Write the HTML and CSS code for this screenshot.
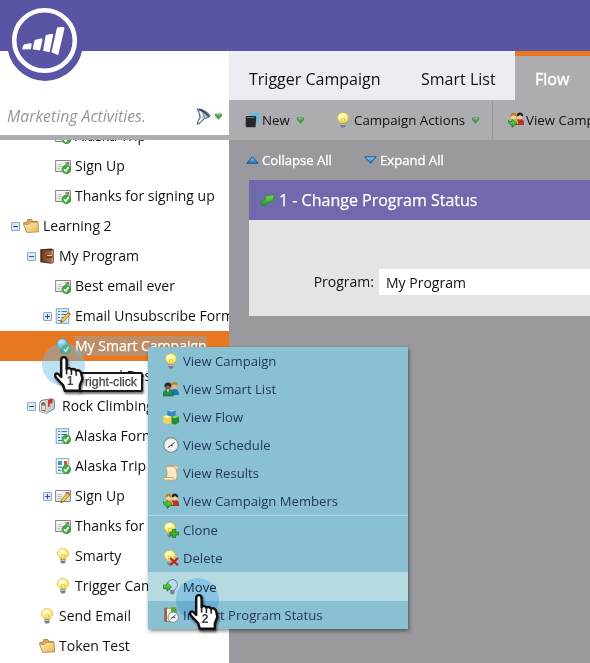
FILE: index.html
```html
<!DOCTYPE html>
<html lang="en">
<head>
<meta charset="utf-8">
<title>Marketing Activities</title>
<link rel="stylesheet" href="styles.css">
</head>
<body>
<svg class="defs" aria-hidden="true">
  <defs>
    <linearGradient id="gGold" x1="0" y1="0" x2="1" y2="1"><stop offset="0" stop-color="#fff3b8"/><stop offset="1" stop-color="#e6b452"/></linearGradient>
    <radialGradient id="gBulb" cx=".42" cy=".35" r=".65"><stop offset="0" stop-color="#fffff0"/><stop offset=".5" stop-color="#fff595"/><stop offset="1" stop-color="#ecd54e"/></radialGradient>
    <radialGradient id="gBlue" cx=".4" cy=".35" r=".65"><stop offset="0" stop-color="#d4efff"/><stop offset="1" stop-color="#5ba9d4"/></radialGradient>
    <linearGradient id="gGreen" x1="0" y1="0" x2="0" y2="1"><stop offset="0" stop-color="#7be05c"/><stop offset="1" stop-color="#209426"/></linearGradient>
    <linearGradient id="gSky" x1="0" y1="0" x2="0" y2="1"><stop offset="0" stop-color="#83d0ff"/><stop offset="1" stop-color="#2274c0"/></linearGradient>
    <linearGradient id="gBrown" x1="0" y1="0" x2="1" y2="0"><stop offset="0" stop-color="#6d3a20"/><stop offset="1" stop-color="#b0714a"/></linearGradient>
    <linearGradient id="gPaper" x1="0" y1="0" x2="1" y2="1"><stop offset="0" stop-color="#fff"/><stop offset="1" stop-color="#d9d9d6"/></linearGradient>
  </defs>
  <symbol id="check" viewBox="0 0 16 16"><circle cx="11.4" cy="11.4" r="4.3" fill="#3fae3c" stroke="#2a8c30" stroke-width=".6"/><path d="M9 11.3l1.700 2 3-4.300" fill="none" stroke="#fff" stroke-width="1.500"/></symbol>
  <symbol id="pencil" viewBox="0 0 16 16"><path d="M5.7 14.5l1-3.2 6.500-7.100 2.200 1.900-6.500 7.200z" fill="#f7c93a" stroke="#8b6420" stroke-width=".7"/><path d="M12.200 5.300l1-1.100 2.200 1.900-1 1.100z" fill="#d7665b"/><path d="M5.700 14.500l.5-1.600 1.100 1z" fill="#333"/></symbol>
  <symbol id="letter" viewBox="0 0 16 16"><path d="M.6 2.500h14.800v11H.6z" fill="url(#gPaper)" stroke="#858585"/><path d="M2.500 6.500h4M2.500 8.500h5M2.500 10.500h4" stroke="#b4b4b4" stroke-width=".8"/><path d="M10.500 4h3.500v3.500h-3.500z" fill="#b8a08c"/><path d="M12.500 4H14v2h-1.500z" fill="#b44f42"/><path d="M10.500 4h1.700v1.700h-1.700z" fill="#78a2c2"/></symbol>
  <symbol id="mail-ok" viewBox="0 0 16 16"><use href="#letter"/><use href="#check"/></symbol>
  <symbol id="mail-edit" viewBox="0 0 16 16"><use href="#letter"/><use href="#pencil"/></symbol>
  <symbol id="sheet" viewBox="0 0 16 16"><path d="M1.200.7h12.600v14.600H1.200z" fill="#dceefb" stroke="#7fa2be"/><path d="M3 3.500h2M6.500 3.500h5.500M3 6.500h2M6.500 6.500h5.500M3 9.500h2M6.500 9.500h5M3 12.500h4" stroke="#4478a4" stroke-width="1.200"/></symbol>
  <symbol id="form-edit" viewBox="0 0 16 16"><use href="#sheet"/><use href="#pencil"/></symbol>
  <symbol id="form-ok" viewBox="0 0 16 16"><use href="#sheet"/><use href="#check"/></symbol>
  <symbol id="page-ok" viewBox="0 0 16 16"><path d="M1.200.7h12.600v14.600H1.200z" fill="#f4faff" stroke="#87a4b9"/><path d="M3 3h4v4H3z" fill="#3b93ce"/><path d="M9 3h3.400v4H9z" fill="#d75440"/><path d="M3 8.500h4v1.400H3zM3 11.500h3V13H3z" fill="#4b91be"/><use href="#check"/></symbol>
  <symbol id="folder" viewBox="0 0 16 16"><path d="M3.500 13.700L.5 4.800l3.700-.9.5-2.400 4.300.1.800 1.900h4.700l.8 9.800z" fill="#dda851" stroke="#a97838" stroke-width=".8"/><path d="M4 14.600L.5 6.200l4.500.3 2-1.900 8-.3.700 9.600z" fill="url(#gGold)" stroke="#b58542" stroke-width=".7"/></symbol>
  <symbol id="program" viewBox="0 0 16 16"><path d="M1.300 1.200l11-.8 2.500 1.400v12.500L12.300 15.700 1.300 14.200z" fill="#4f2818"/><path d="M2.800 2l9.400.7v12.100l-9.400-1.400z" fill="url(#gBrown)"/><path d="M12.200 2.600l2.300-.6v12l-2.300.9z" fill="#c88c61"/><path d="M7.500 8.300h6" stroke="#3b1e14" stroke-width="3"/><path d="M8 7.700h5.200" stroke="#f4ddc4" stroke-width="1.200"/></symbol>
  <symbol id="bulb" viewBox="0 0 16 16"><path d="M8 .5a5.700 5.300 0 0 0-5.700 5.300c0 2.400 2.700 3.400 3.100 5.500h5.200c.4-2.100 3.100-3.100 3.100-5.500A5.700 5.300 0 0 0 8 .5z" fill="url(#gBulb)" stroke="#d1b83c" stroke-width=".7"/><path d="M7 11L6.300 6.700h3.400L9 11" fill="none" stroke="#e0b62d" stroke-width=".7"/><path d="M5.400 11.200h5.200v2.700L9.300 15.600H6.700l-1.300-1.700z" fill="#777e85"/><path d="M5.500 12.300h5" stroke="#d9dfe2" stroke-width=".9"/></symbol>
  <symbol id="bulb-blue" viewBox="0 0 16 16"><path d="M7.300.5a5.300 5.300 0 0 0-5.300 5.300c0 2.400 2.400 3.500 2.800 5.600h5c.4-2.100 2.800-3.200 2.800-5.600A5.300 5.300 0 0 0 7.300.5z" fill="url(#gBlue)" stroke="#4a8fb8" stroke-width=".8"/><path d="M4.900 11.300h4.800v2.500L8.400 15.200H6.200l-1.300-1.400z" fill="#586c7a"/><use href="#check"/></symbol>
  <symbol id="mailbox" viewBox="0 0 16 16"><path d="M.7 13.500V5.500Q.7 2 4.200 2l8.300-1.200q3-.2 3 3v7L7.300 15.300z" fill="#c7d0d5" stroke="#7c8a92"/><path d="M1.500 13V6q0-2.500 2.700-2.500T7.200 6v8.500z" fill="#8d6a5a" stroke="#eee"/><path d="M2.600 7.500h3.500v4.500H2.600z" fill="#e7dccb"/><path d="M9.800 9V2.500l3-.8v3l-1.700.4" fill="#d33c32" stroke="#c12e29" stroke-width="1.300"/></symbol>
  <symbol id="people" viewBox="0 0 16 16"><path d="M7 14c0-4 1.500-6 4.500-6s4.500 2 4.500 6z" fill="#2173a9"/><circle cx="11.500" cy="4.800" r="3.100" fill="#e5b586"/><path d="M8.200 4.500q.3-3.600 3.400-3.400 3.300-.1 3.400 3.400-2.400 0-3.800-1.500-1 1.200-3 1.500z" fill="#ba822c"/><path d="M0 15c0-4.500 1.500-6.200 5-6.200s5.200 2 5.200 6.200z" fill="#238b4b" stroke="#16613a" stroke-width=".6"/><circle cx="4.900" cy="5.700" r="3.200" fill="#90614a"/><path d="M1.400 5.700q0-4.200 3.600-4.200 3.600 0 3.400 4.200-2 0-3.400-1.500-1.300 1.500-3.600 1.500z" fill="#272727"/><path d="M4 8.800l1 3 1-3" fill="#fff"/></symbol>
  <symbol id="members" viewBox="0 0 16 16"><path d="M7.500 13c0-4 1-6 4.500-6s4 2 4 6z" fill="#b53427"/><circle cx="11.800" cy="4.400" r="3" fill="#f3ca98"/><path d="M8.600 4.500q0-3.900 3.200-3.900 3.500 0 3.400 4.100-2-.3-3.100-1.600-1.200 1.100-3.500 1.400z" fill="#302820"/><path d="M1.500 12c0-3.500 1-5 4.200-5s4.500 1.500 4.500 5z" fill="#d8a933"/><circle cx="5.500" cy="4.500" r="3" fill="#f5ce9f"/><path d="M2.300 4.800Q2.100.8 5.500.8q3.500 0 3.300 3.900-2-.3-3.100-1.600-1.100 1.300-3.400 1.700z" fill="#b98022"/><path d="M.4 8.200q1 2 3.600 1.600V7.300l5 4-5 4.200V13Q.5 13 .4 8.200z" fill="url(#gGreen)" stroke="#16791b" stroke-width=".7"/></symbol>
  <symbol id="blocks" viewBox="0 0 16 16"><path d="M4.300 1.500L8.200.2l4.500 1.200v6L8.200 8.900 4.300 7.200z" fill="#3b86cb"/><path d="M4.300 1.500L8.200.2l4.500 1.200L8.200 2.700z" fill="#9bd3f4"/><path d="M.2 7.500l3.700-1 4.600 1.300v6.100L4.200 15.500.2 13.800z" fill="#f2d353"/><path d="M.2 7.500l3.700-1 4.600 1.300-4.300 1.400z" fill="#fff6b0"/><path d="M8.600 8l3.800-1.700L16 7.800v5.800l-4.400 2.200-3-1.500z" fill="#238d2f"/><path d="M8.600 8l3.800-1.700L16 7.800l-4.400 1.600z" fill="#7ed65c"/></symbol>
  <symbol id="clock" viewBox="0 0 16 16"><circle cx="8" cy="8" r="7.300" fill="#f3f5f6" stroke="#84898e" stroke-width="1.200"/><circle cx="8" cy="8" r="5.700" fill="none" stroke="#b6bdc1" stroke-width=".8" stroke-dasharray=".8 2.180"/><path d="M4.800 10.500L7.700 8.400 11.500 5.500M7.700 8.400L10 9" fill="none" stroke="#454b50"/></symbol>
  <symbol id="scroll" viewBox="0 0 16 16"><path d="M3.500 1h10q2.300.2 2 3h-2.500q1.500 5 .8 8.700-.3 2.500-2.300 2.500H2.300Q.3 15 .4 12.300h3.200Q5 8 3.400 4 2.500 1.500 3.500 1z" fill="#f9ebc8" stroke="#c29a63" stroke-width=".7"/><path d="M1 12.500h9q.3 2 1.500 2M4 1.300q8.700-.3 9 2.500" fill="none" stroke="#cf9f5d" stroke-width=".9"/></symbol>
  <symbol id="bulb-add" viewBox="0 0 16 16"><use href="#bulb" x="-1.200" y="-.3" width="16" height="16"/><path d="M9.600 7.300h3v2.800h2.900v2.900h-2.900v2.700h-3V13H6.800v-2.900h2.800z" fill="#39b62d" stroke="#1c7a1c" stroke-width=".8"/></symbol>
  <symbol id="bulb-del" viewBox="0 0 16 16"><use href="#bulb" x="-1.200" y="-.3" width="16" height="16"/><path d="M7.200 8l7.800 7.200M15 8l-7.800 7.200" stroke="#bd251f" stroke-width="2.200"/></symbol>
  <symbol id="bulb-move" viewBox="0 0 16 16"><path d="M9.500.5a5.200 5.200 0 0 0-5 5.200c0 2.400 1.800 3.600 2.500 5.700h4.500c.7-2.100 3-3.300 3-5.700A5 5.200 0 0 0 9.500.5z" fill="#bddbed" stroke="#65869c"/><path d="M7 11.300h4.500v2.600l-1.200 1.600h-2.100L7 13.900z" fill="#7c8790"/><path d="M.4 6h3.600V3.500l4.600 4.400L4 12.300V9.700H.4z" fill="url(#gGreen)" stroke="#16791b" stroke-width=".7"/></symbol>
  <symbol id="import" viewBox="0 0 16 16"><path d="M2 1.200h11v13.300H2z" fill="#f4f1e5" stroke="#a58468"/><path d="M1.300.8h2.700v14H1.300z" fill="#94674a"/><path d="M8 .4h5.500v5.500H8z" fill="#54aa38"/><circle cx="10.200" cy="10.200" r="5.200" fill="#f3f5f6" stroke="#7f878b"/><path d="M7.600 12l5-4M10 10.100l2.300.7" stroke="#43494d"/></symbol>
  <symbol id="caret" viewBox="0 0 8 7"><path d="M.4.500h7.200v2L4 6.700.4 2.500z" fill="#42a838" stroke="#278329" stroke-width=".7"/><path d="M1.500 1.500h5" stroke="#a0df8b"/></symbol>
  <symbol id="hand" viewBox="0 0 30 34"><path d="M8.500 19V5.200q0-2.700 2.200-2.700T13 5.200v7.300q2.200-1.800 4 .5 2.400-1.400 3.900.9 2.300-1.300 4 1.300l1.300 5.600-2.200 5.200v4.500H11.500L10.200 26l-5.900-6.300q-1.800-2.500 0-3.400 1.300-.7 4.200 2.700z" fill="#fff" stroke="#111" stroke-width="2" stroke-linejoin="round"/><path d="M13 12v5M17 13.500v4M21 14.500v3.500" stroke="#222" stroke-width="1.300"/></symbol>
</svg>

<div class="app">
  <header class="topbar">
    <div class="logo">
      <svg viewBox="0 0 76 76"><circle cx="38" cy="38" r="38" fill="#5a54a4"/><circle cx="37.500" cy="35.500" r="30.300" fill="none" stroke="#fff" stroke-width="4.600"/><path d="M17.500 39.300l5.500-1q2-.3 1.700 1.500l-.8 4.500-8.600.2q.3-4.100 2.200-5.200zM28.500 34.700l5.300-1.300q2-.4 1.700 1.500L33 45.400l-7.300-1.200 1.600-8.100q.3-1.100 1.200-1.400zM39.700 29.800l4.700-.9q2.100-.4 1.700 1.700L42.600 47.200l-6.500-1.400L38.500 31q.2-1 1.200-1.200zM51.200 22.300l4.500-.3q2.100-.2 1.700 2L51.200 50.200l-6.700-3L49.800 23.500q.3-1.100 1.400-1.200z" fill="#fff"/></svg>
    </div>
  </header>
  <div class="body">
    <aside class="sidebar">
      <div class="search">
        <span class="search-label">Marketing Activities.</span>
        <svg class="funnel" viewBox="0 0 15 17"><path d="M1 1Q5 .5 9 3l4.500 3.500q1 1.200.2 2.200Q11.500 10 8.500 10.500L4 15.200 1.300 16.300l.3-2.500L4 9.500Q3.500 4.500 1 1z" fill="#b4c4d6" stroke="#414e66" stroke-width=".9"/><path d="M3 1.500Q9 3.500 12.800 8.500" fill="none" stroke="#34465f" stroke-width="1.800"/><path d="M4 3.500Q6.500 7 5.800 10L3 14" fill="none" stroke="#fff" stroke-width="1.300"/><path d="M7.500 5.500q1.300 2 .5 4.500" fill="none" stroke="#6e84a0"/></svg>
        <svg class="caret"><use href="#caret"/></svg>
      </div>
      <div class="tree">
        <div class="row l3"><i></i><svg><use href="#mail-ok"/></svg><span>Alaska Trip</span></div>
        <div class="row l3"><i></i><svg><use href="#mail-ok"/></svg><span>Sign Up</span></div>
        <div class="row l3"><i></i><svg><use href="#mail-ok"/></svg><span>Thanks for signing up</span></div>
        <div class="row l1"><i class="box"></i><svg><use href="#folder"/></svg><span>Learning 2</span></div>
        <div class="row l2"><i class="box"></i><svg><use href="#program"/></svg><span>My Program</span></div>
        <div class="row l3"><i></i><svg><use href="#mail-ok"/></svg><span>Best email ever</span></div>
        <div class="row l3"><i class="box plus"></i><svg><use href="#form-edit"/></svg><span>Email Unsubscribe Form</span></div>
        <div class="row l3 selected"><i></i><svg><use href="#bulb-blue"/></svg><span>My Smart Campaign</span></div>
        <div class="row l3"><i></i><svg class="blank"></svg><span>Second Desc</span></div>
        <div class="row l2"><i class="box"></i><svg><use href="#mailbox"/></svg><span class="wide-gap">Rock Climbing</span></div>
        <div class="row l3"><i></i><svg><use href="#form-ok"/></svg><span>Alaska Form</span></div>
        <div class="row l3"><i></i><svg><use href="#page-ok"/></svg><span>Alaska Trip</span></div>
        <div class="row l3"><i class="box plus"></i><svg><use href="#mail-edit"/></svg><span>Sign Up</span></div>
        <div class="row l3"><i></i><svg><use href="#mail-ok"/></svg><span>Thanks for</span></div>
        <div class="row l3"><i></i><svg><use href="#bulb"/></svg><span>Smarty</span></div>
        <div class="row l3"><i></i><svg><use href="#bulb"/></svg><span>Trigger Campaign</span></div>
        <div class="row l2"><i></i><svg><use href="#bulb"/></svg><span>Send Email</span></div>
        <div class="row l2"><i></i><svg><use href="#folder"/></svg><span>Token Test</span></div>
      </div>
    </aside>
    <main class="main">
      <nav class="tabs">
        <span class="tab trigger">Trigger Campaign</span><span class="tab list">Smart List</span><span class="tab active">Flow</span>
      </nav>
      <div class="toolbar">
        <div class="tool new"><svg class="tool-icon" viewBox="0 0 16 16"><path d="M5 .7h8q1 0 1 1v9h-3V4H5z" fill="#63b9df"/><path d="M2 4h8q1.300 0 1.200 1.500l-.7 9.800H2Q.7 15.300.7 14V5.500Q.7 4 2 4z" fill="#26292c"/><path d="M2 5.500h7.500" stroke="#777"/></svg><span>New</span><svg class="caret"><use href="#caret"/></svg></div>
        <div class="tool actions"><svg class="tool-icon"><use href="#bulb"/></svg><span>Campaign Actions</span><svg class="caret"><use href="#caret"/></svg></div>
        <div class="tool members"><svg class="tool-icon"><use href="#members"/></svg><span>View Campaign</span></div>
      </div>
      <div class="expanders">
        <span class="exp first"><svg viewBox="0 0 13 8"><path d="M6.500.7l5.600 6.500H.9z" fill="url(#gSky)" stroke="#165286"/></svg>Collapse All</span>
        <span class="exp"><svg viewBox="0 0 13 8"><path d="M6.500 7.300L.9.800h11.200z" fill="url(#gSky)" stroke="#165286"/></svg>Expand All</span>
      </div>
      <section class="card">
        <h2><svg viewBox="0 0 15 12"><path d="M.8 8.500L6.300 4.600 4.500 2.400 14 .7l-1.200 7.800-2-1.500L5 11.400 1.600 11z" fill="url(#gGreen)" stroke="#278e28" stroke-width=".7"/></svg>1 - Change Program Status</h2>
        <div class="field"><label>Program:</label><div class="input">My Program</div></div>
      </section>
    </main>
  </div>

  <div class="halo one"></div>
  <div class="callout">right-click</div>
  <div class="menu">
    <div class="item"><svg><use href="#bulb"/></svg>View Campaign</div>
    <div class="item"><svg><use href="#people"/></svg>View Smart List</div>
    <div class="item"><svg><use href="#blocks"/></svg>View Flow</div>
    <div class="item"><svg><use href="#clock"/></svg>View Schedule</div>
    <div class="item"><svg><use href="#scroll"/></svg>View Results</div>
    <div class="item"><svg><use href="#members"/></svg>View Campaign Members</div>
    <div class="item split"><svg><use href="#bulb-add"/></svg>Clone</div>
    <div class="item"><svg><use href="#bulb-del"/></svg>Delete</div>
    <div class="item hover"><svg><use href="#bulb-move"/></svg>Move</div>
    <div class="item"><svg><use href="#import"/></svg>Import Program Status</div>
  </div>
  <div class="halo two"></div>
  <div class="pointer p1"><svg><use href="#hand"/></svg><b>1</b></div>
  <div class="pointer p2"><svg><use href="#hand"/></svg><b>2</b></div>
</div>
</body>
</html>
```
FILE: styles.css
```css
* { box-sizing: border-box; }
body { margin: 0; font: 14px "Open Sans", sans-serif; color: #111; }
.defs { position: absolute; width: 0; height: 0; }
.app { position: relative; width: 590px; height: 663px; overflow: hidden; background: #9a999e; }
.topbar { height: 51px; background: #5a54a4; }
.logo { position: absolute; left: 7px; top: 5px; width: 76px; height: 76px; z-index: 1; }
.logo svg { display: block; width: 76px; height: 76px; }
.body { display: flex; height: 612px; }

.sidebar { width: 229px; flex: none; background: #fff; overflow: hidden; }
.search { height: 89px; border-bottom: 5px solid #adacb1; display: flex; align-items: flex-end; padding: 0 7px 8px 7px; }
.search-label { font-size: 15.8px; line-height: 22px; font-style: italic; color: #96969a; flex: 1; white-space: nowrap; }
.funnel { width: 15px; height: 17px; margin: 0 4px 2px 0; }
.caret { width: 7px; height: 7px; flex: none; }
.search .caret { margin-bottom: 7px; }
.tree { height: 523px; overflow: hidden; }
.row { height: 30px; display: flex; align-items: center; white-space: nowrap; }
.row:first-child { margin-top: -19px; }
.row svg { width: 16px; height: 16px; flex: none; margin-right: 4px; }
.row i { width: 9px; height: 9px; margin-right: 3px; flex: none; }
.row span { padding-bottom: 2px; }
.l1 { padding-left: 11px; }
.l2 { padding-left: 27px; }
.l3 { padding-left: 43px; }
.box { border: 1px solid #8aa6ca; border-radius: 1px; background: linear-gradient(#274d88, #274d88) center / 5px 1px no-repeat, #dfeaf8; }
.plus { background: linear-gradient(#274d88, #274d88) center / 5px 1px no-repeat, linear-gradient(#274d88, #274d88) center / 1px 5px no-repeat, #dfeaf8; }
.wide-gap { margin-left: 3px; }
.selected { background: #e87722; color: #fff; }
.row.selected span { background: #bd8e68; line-height: 20px; padding: 0; -webkit-text-stroke: .25px #fff; }

.main { flex: 1; min-width: 0; overflow: hidden; }
.tabs { height: 49px; display: flex; background: #adacb1; font-size: 16px; line-height: 56px; }
.tab { background: #edecf2; white-space: nowrap; overflow: hidden; }
.trigger { width: 172px; padding-left: 20px; }
.list { width: 114px; padding-left: 20px; }
.active { flex: 1; border-top: 5px solid #e87722; background: #adacb1; color: #fff; padding-left: 20px; line-height: 46px; -webkit-text-stroke: .4px #fff; }
.toolbar { height: 40px; background: #adacb1; display: flex; font-size: 13.3px; }
.tool { display: flex; align-items: center; white-space: nowrap; flex: none; }
.tool-icon { width: 16px; height: 16px; margin-right: 1px; }
.tool .caret { margin-left: 7px; }
.new { width: 91px; padding-left: 16px; }
.actions { width: 172px; padding-left: 15px; }
.actions .tool-icon { margin-right: 3px; }
.tool.members { border-left: 1px solid #98979c; padding-left: 15px; }
.tool.members .tool-icon { margin-right: 2px; }
.expanders { height: 40px; display: flex; align-items: center; color: #fff; padding: 0 0 0 17px; font-size: 13.1px; -webkit-text-stroke: .3px #fff; }
.exp { display: flex; align-items: center; white-space: nowrap; }
.exp svg { width: 13px; height: 8px; margin-right: 3px; }
.first { width: 118px; }
.card { margin-left: 20px; height: 136px; background: #e4e4e4; }
.card h2 { margin: 0; height: 40px; background: #7069ae; color: #fff; font-size: 16px; font-weight: 400; display: flex; align-items: center; padding-left: 11px; -webkit-text-stroke: .25px #fff; }
.card h2 svg { width: 15px; height: 12px; margin-right: 4px; }
.field { margin-top: 49px; display: flex; height: 26px; line-height: 26px; }
.field label { width: 130px; padding-right: 5px; text-align: right; }
.input { flex: 1; background: #fff; padding-left: 7px; line-height: 28px; }

.menu { position: absolute; left: 148px; top: 347px; width: 260px; height: 282px; background: #89c1d2; color: #24365e; box-shadow: 1px 2px 4px #0007; }
.item { height: 28px; display: flex; align-items: center; padding-left: 15px; font-size: 13.1px; white-space: nowrap; }
.item svg { width: 16px; height: 16px; margin-right: 4px; }
.split { height: 29px; border-top: 1px solid #b5d8e2; }
.hover { height: 29px; background: #b6dae2; color: #152b3a; }

.halo { position: absolute; width: 43px; height: 43px; border-radius: 50%; }
.one { left: 42px; top: 343px; background: #68bce570; }
.two { left: 176px; top: 578px; background: #c0e6ff; mix-blend-mode: multiply; }
.pointer { position: absolute; width: 36px; height: 41px; filter: drop-shadow(1px 2px 1px #0009); }
.pointer svg { display: block; width: 36px; height: 41px; }
.pointer b { position: absolute; left: 0; width: 38px; top: 20px; text-align: center; font: bold 12px/14px "Liberation Sans", sans-serif; color: #444; }
.p1 { left: 51px; top: 354px; }
.p2 { left: 186px; top: 592px; }
.callout { position: absolute; left: 79px; top: 372px; width: 64px; height: 20px; border: 2px solid #181818; border-radius: 2px; background: #fff; color: #444; font: 12.3px/16px "Liberation Sans", sans-serif; padding-left: 4px; box-shadow: 1px 2px 2px #0008; -webkit-text-stroke: .25px #444; white-space: nowrap; }
```
